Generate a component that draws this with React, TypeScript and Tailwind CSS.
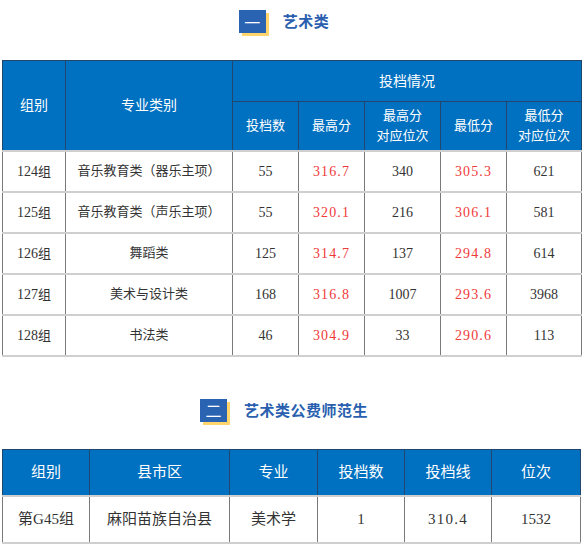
import React from "react";

const serif = { fontFamily: '"Liberation Serif", "Noto Sans CJK SC", serif' };

function Heading({ num, title }: { num: string; title: string }) {
  return (
    <div className="flex items-center justify-center pr-[16px]">
      <div className="flex h-[23px] w-[27px] items-center justify-center bg-[#2b63b3] text-[16px] leading-none text-white shadow-[3px_3px_0_#ffd56c]" style={{ fontFamily: '"Noto Sans CJK SC", sans-serif' }}>
        {num}
      </div>
      <div className="ml-[17px] text-[15px] font-bold tracking-[0.5px] text-[#2a5fb0]" style={{ fontFamily: '"Noto Sans CJK SC", sans-serif' }}>
        {title}
      </div>
    </div>
  );
}

const rows1 = [
  ["124组", "音乐教育类（器乐主项）", "55", "316.7", "340", "305.3", "621"],
  ["125组", "音乐教育类（声乐主项）", "55", "320.1", "216", "306.1", "581"],
  ["126组", "舞蹈类", "125", "314.7", "137", "294.8", "614"],
  ["127组", "美术与设计类", "168", "316.8", "1007", "293.6", "3968"],
  ["128组", "书法类", "46", "304.9", "33", "290.6", "113"],
];

const th = "border border-[#23466f] bg-[#0070c0] text-white font-normal text-center align-middle p-0";
const td = "border-x border-x-[#7a7a7a] border-y-2 border-y-[#cfcfcf] text-center align-middle p-0 text-[#333]";

export default function App() {
  return (
    <div className="w-[584px] bg-white pt-[10px]" style={serif}>
      <Heading num="一" title="艺术类" />
      <div className="mt-[27px] pl-[2px]">
        <table className="w-[579px] table-fixed border-collapse text-[13px]">
          <colgroup>
            <col className="w-[63px]" />
            <col className="w-[167px]" />
            <col className="w-[66px]" />
            <col className="w-[66px]" />
            <col className="w-[76px]" />
            <col className="w-[66px]" />
            <col className="w-[75px]" />
          </colgroup>
          <thead>
            <tr className="h-[41px] text-[14px]">
              <th rowSpan={2} className={th}>组别</th>
              <th rowSpan={2} className={th}>专业类别</th>
              <th colSpan={5} className={th}>投档情况</th>
            </tr>
            <tr className="h-[49px] leading-[20px]">
              <th className={th}>投档数</th>
              <th className={th}>最高分</th>
              <th className={th}>最高分<br />对应位次</th>
              <th className={th}>最低分</th>
              <th className={th}>最低分<br />对应位次</th>
            </tr>
          </thead>
          <tbody>
            {rows1.map((r, i) => (
              <tr key={i} className={"h-[41px]" + (i === rows1.length - 1 ? " border-b border-b-[#7a7a7a]" : "")}>
                <td className={td + " text-[14px]"}>
                  {r[0].replace("组", "")}
                  <span className="text-[13px]">组</span>
                </td>
                <td className={td}>{r[1]}</td>
                <td className={td + " text-[14px]"}>{r[2]}</td>
                <td className={td + " text-[14px] tracking-[1.1px] text-[#f03a3a]"}>{r[3]}</td>
                <td className={td + " text-[14px]"}>{r[4]}</td>
                <td className={td + " text-[14px] tracking-[1.1px] text-[#f03a3a]"}>{r[5]}</td>
                <td className={td + " text-[14px]"}>{r[6]}</td>
              </tr>
            ))}
          </tbody>
        </table>
      </div>

      <div className="mt-[42px]">
        <Heading num="二" title="艺术类公费师范生" />
      </div>
      <div className="mt-[27px] pl-[2px]">
        <table className="w-[578px] table-fixed border-collapse text-[15px]">
          <colgroup>
            <col className="w-[87px]" />
            <col className="w-[140px]" />
            <col className="w-[88px]" />
            <col className="w-[87px]" />
            <col className="w-[87px]" />
            <col className="w-[89px]" />
          </colgroup>
          <thead>
            <tr className="h-[47px]">
              <th className={th}>组别</th>
              <th className={th}>县市区</th>
              <th className={th}>专业</th>
              <th className={th}>投档数</th>
              <th className={th}>投档线</th>
              <th className={th}>位次</th>
            </tr>
          </thead>
          <tbody>
            <tr className="h-[47px] border-b border-b-[#7a7a7a]">
              <td className={td}>第G45组</td>
              <td className={td}>麻阳苗族自治县</td>
              <td className={td}>美术学</td>
              <td className={td}>1</td>
              <td className={td + " tracking-[1.3px]"}>310.4</td>
              <td className={td}>1532</td>
            </tr>
          </tbody>
        </table>
      </div>
    </div>
  );
}
